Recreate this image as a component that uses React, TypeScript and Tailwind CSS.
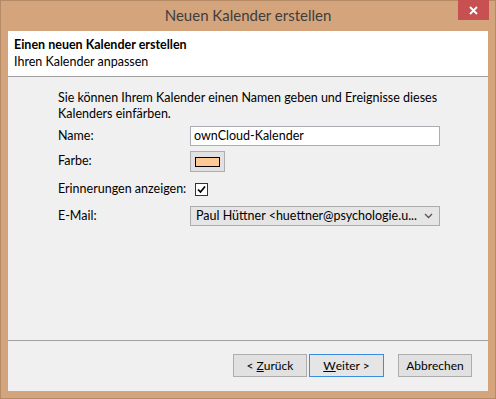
import React from "react";

const font = { fontFamily: 'Lato, "Noto Sans", sans-serif' };

function Btn({ children, primary, w }: { children: React.ReactNode; primary?: boolean; w: string }) {
  return (
    <div
      className={`${w} h-[23px] flex items-center justify-center text-[12px] text-[#000] border ${
        primary ? "border-[#3c8ce0] bg-[#e5e5e5]" : "border-[#adadad] bg-[#e1e1e1]"
      }`}
    >
      {children}
    </div>
  );
}

export default function App() {
  return (
    <div
      className="w-[496px] h-[399px] bg-[#d4a57d] border border-[#b58a66] flex flex-col text-[#000]"
      style={font}
    >
      {/* title bar */}
      <div className="relative h-[30px] flex items-center justify-center shrink-0">
        <span className="text-[15px] text-[#3d3d3d] -mt-[1px]">Neuen Kalender erstellen</span>
        <div className="absolute top-[-1px] right-[6px] w-[31px] h-[20px] bg-[#c75050] flex items-center justify-center">
          <svg width="9" height="9" viewBox="0 0 9 9">
            <path d="M1 1 L8 8 M8 1 L1 8" stroke="#fff" strokeWidth="1.8" />
          </svg>
        </div>
      </div>
      {/* client */}
      <div className="mx-[7px] mb-[7px] flex-1 flex flex-col bg-[#f0f0f0]">
        <div className="h-[46px] bg-white border-b border-[#a0a0a0] px-[6px] pt-[5px] flex flex-col shrink-0">
          <div className="text-[12.5px] font-bold leading-[17px]">Einen neuen Kalender erstellen</div>
          <div className="text-[12.5px] leading-[17px]">Ihren Kalender anpassen</div>
        </div>
        <div className="flex-1 pl-[50px] pt-[13px] text-[12.5px]">
          <div className="leading-[16px] w-[400px]">
            Sie können Ihrem Kalender einen Namen geben und Ereignisse dieses Kalenders einfärben.
          </div>
          <div className="mt-[4px] flex items-center h-[20px]">
            <div className="w-[132px]">Name:</div>
            <div className="w-[250px] h-[20px] bg-white border border-[#abadb3] flex items-center pl-[3px]">
              ownCloud-Kalender
            </div>
          </div>
          <div className="mt-[5px] flex items-center h-[21px]">
            <div className="w-[132px]">Farbe:</div>
            <div className="w-[35px] h-[21px] border border-[#adadad] bg-[#e1e1e1] flex items-center justify-center">
              <div className="w-[25px] h-[10px] bg-[#ffc896] border border-[#000]" />
            </div>
          </div>
          <div className="mt-[5px] flex items-center h-[24px]">
            <div className="w-[137px] whitespace-nowrap">Erinnerungen anzeigen:</div>
            <div className="w-[13px] h-[13px] bg-white border border-[#333] flex items-center justify-center">
              <svg width="9" height="9" viewBox="0 0 9 9">
                <path d="M1 4.5 L3.5 7 L8 1.5" stroke="#000" strokeWidth="1.7" fill="none" />
              </svg>
            </div>
          </div>
          <div className="mt-[5px] flex items-center h-[20px]">
            <div className="w-[132px]">E-Mail:</div>
            <div className="w-[250px] h-[20px] bg-[#e5e5e5] border border-[#acacac] flex items-center pl-[5px] pr-[6px]">
              <span className="flex-1 whitespace-nowrap overflow-hidden">
                Paul Hüttner &lt;huettner@psychologie.u...
              </span>
              <svg width="9" height="6" viewBox="0 0 9 6">
                <path d="M1 1 L4.5 4.5 L8 1" stroke="#555" strokeWidth="1.3" fill="none" />
              </svg>
            </div>
          </div>
        </div>
        <div className="h-[51px] border-t border-[#a0a0a0] flex items-start justify-end pt-[13px] pr-[16px] shrink-0">
          <Btn w="w-[74px]">
            &lt; <span className="underline ml-[3px]">Z</span>urück
          </Btn>
          <div className="w-[2px]" />
          <Btn w="w-[75px]" primary>
            <span className="underline">W</span>eiter &gt;
          </Btn>
          <div className="w-[14px]" />
          <Btn w="w-[74px]">Abbrechen</Btn>
        </div>
      </div>
    </div>
  );
}
